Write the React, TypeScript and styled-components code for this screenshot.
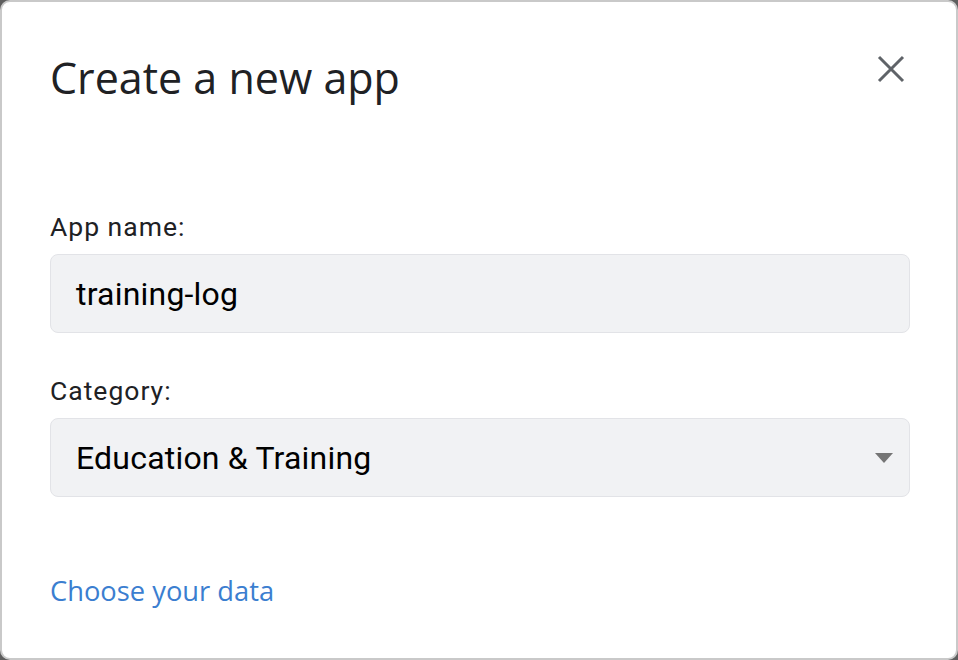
import styled, { createGlobalStyle } from 'styled-components';

const GlobalStyle = createGlobalStyle`
  html, body {
    margin: 0;
    padding: 0;
    background: #5e5e5e;
  }
  * {
    box-sizing: border-box;
  }
`;

const Dialog = styled.section`
  width: 958px;
  height: 660px;
  background: #ffffff;
  border: 2px solid #c9c9c9;
  border-radius: 10px;
  padding: 0 46px 0 48px;
  display: flex;
  flex-direction: column;
  font-family: Roboto, 'Liberation Sans', sans-serif;
`;

const Header = styled.header`
  display: flex;
  justify-content: space-between;
  align-items: flex-start;
  padding-top: 48px;
  height: 208px;
`;

const Title = styled.h1`
  margin: 0;
  font-family: 'Open Sans', 'Liberation Sans', sans-serif;
  font-weight: 400;
  font-size: 43px;
  line-height: 56px;
  color: #202124;
`;

const CloseBtn = styled.button`
  border: 0;
  background: transparent;
  padding: 0;
  margin-top: 5px;
  margin-right: 5px;
  width: 28px;
  height: 28px;
  display: flex;
  cursor: pointer;
`;

const Field = styled.div`
  display: flex;
  flex-direction: column;
  gap: 10px;
  margin-bottom: 41px;
`;

const Label = styled.label`
  font-size: 26.5px;
  line-height: 34px;
  letter-spacing: 1px;
  color: #202124;
`;

const Control = styled.div<{ $select?: boolean }>`
  height: 79px;
  background: #f1f2f4;
  border: 1px solid #e2e3e7;
  border-radius: 8px;
  display: flex;
  align-items: center;
  justify-content: space-between;
  padding: 0 16px 0 25px;
  font-size: 32px;
  letter-spacing: 0.2px;
  color: #000000;
  cursor: ${(p) => (p.$select ? 'pointer' : 'text')};
`;

const Caret = styled.span`
  width: 0;
  height: 0;
  border-left: 9.5px solid transparent;
  border-right: 9.5px solid transparent;
  border-top: 10px solid #757575;
`;

const DataLink = styled.a`
  margin-top: 34px;
  font-family: 'Open Sans', 'Liberation Sans', sans-serif;
  font-size: 27.3px;
  color: #3b7ed0;
  text-decoration: none;
  align-self: flex-start;
`;

export default function App() {
  return (
    <>
      <GlobalStyle />
      <Dialog>
        <Header>
          <Title>Create a new app</Title>
          <CloseBtn aria-label="Close">
            <svg width="28" height="28" viewBox="0 0 28 28">
              <path d="M2 2 L26 26 M26 2 L2 26" stroke="#5f6368" strokeWidth="3" />
            </svg>
          </CloseBtn>
        </Header>
        <Field>
          <Label>App name:</Label>
          <Control>training-log</Control>
        </Field>
        <Field>
          <Label>Category:</Label>
          <Control $select>
            Education &amp; Training
            <Caret />
          </Control>
        </Field>
        <DataLink href="#">Choose your data</DataLink>
      </Dialog>
    </>
  );
}
